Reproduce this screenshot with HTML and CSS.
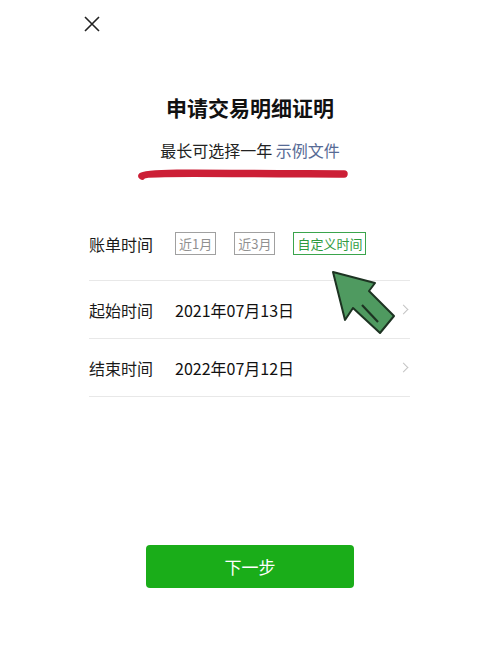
FILE: index.html
```html
<!DOCTYPE html>
<html lang="zh-CN">
<head>
  <meta charset="UTF-8">
  <title>申请交易明细证明</title>
  <link rel="stylesheet" href="styles.css">
</head>
<body>

<div class="page">

  <div class="close">
    <svg width="16" height="16" viewBox="0 0 16 16">
      <path d="M1 1 L15 15 M15 1 L1 15" stroke="#222" stroke-width="1.6" fill="none"/>
    </svg>
  </div>

  <div class="head">
    <h2 class="title">申请交易明细证明</h2>
    <p class="sub">最长可选择一年 <span class="link">示例文件</span></p>
    <svg class="mark" width="216" height="14" viewBox="0 0 216 14">
      <path d="M5 8 C 8 4.5, 60 5, 110 5.5 S 190 5.5, 207 6" stroke="#cc1f36" stroke-width="7.5" stroke-linecap="round" fill="none"/>
    </svg>
  </div>

  <div class="form">
    <div class="row first">
      <span class="label">账单时间</span>
      <div class="chips">
        <span class="chip">近1月</span>
        <span class="chip">近3月</span>
        <span class="chip on">自定义时间</span>
      </div>
    </div>
    <div class="row">
      <span class="label">起始时间</span>
      <span class="value">2021年07月13日</span>
      <span class="arrow"></span>
    </div>
    <div class="row">
      <span class="label">结束时间</span>
      <span class="value">2022年07月12日</span>
      <span class="arrow"></span>
    </div>
  </div>

  <div class="actions">
    <button class="next">下一步</button>
  </div>

  <!-- hand-drawn pointer over the custom time chip -->
  <svg class="pointer" width="80" height="75" viewBox="0 0 80 75">
    <polygon points="8,7 50,18 44,26 69,51 55,68 28,43 20,55" fill="#4f9a60" stroke="#1d3322" stroke-width="2" stroke-linejoin="round"/>
    <path d="M37 40 L53 57" stroke="#1d3322" stroke-width="2.2"/>
  </svg>

</div>

</body>
</html>
```

FILE: styles.css
```css
body {
  margin: 0;
  background: #fff;
  font-family: "Noto Sans CJK SC", "Noto Sans", sans-serif;
  color: #1a1a1a;
}
.page {
  position: relative;
  width: 500px;
  height: 656px;
}
.close {
  padding: 16px 0 0 84px;
  height: 16px;
  line-height: 0;
}
.head {
  text-align: center;
  padding-top: 61px;
}
.title {
  margin: 0;
  font-size: 21px;
  line-height: 28px;
  font-weight: bold;
  color: #111;
}
.sub {
  margin: 18px 0 0;
  font-size: 16px;
  line-height: 22px;
  color: #222;
}
.link {
  color: #576b95;
}
.mark {
  display: block;
  margin: 7px 0 0 137px;
}
.form {
  margin: 40px 90px 0 89px;
}
.row {
  display: flex;
  align-items: center;
  height: 57px;
  border-bottom: 1px solid #e8e8e8;
  font-size: 16px;
}
.row.first {
  height: 58px;
  align-items: flex-start;
}
.row.first .label,
.row.first .chips {
  margin-top: 10px;
}
.label {
  width: 86px;
  flex: none;
  color: #1a1a1a;
}
.value {
  flex: 1;
  color: #111;
}
.chips {
  display: flex;
  gap: 18px;
}
.chip {
  display: inline-block;
  height: 21px;
  line-height: 21px;
  padding: 0 3px;
  border: 1px solid #a0a0a0;
  font-size: 13px;
  color: #909090;
}
.chip.on {
  border-color: #3aa44c;
  color: #2f9b40;
}
.arrow {
  width: 6px;
  height: 6px;
  border-top: 1.5px solid #c4c4c4;
  border-right: 1.5px solid #c4c4c4;
  transform: rotate(45deg);
  margin-right: 3px;
}
.actions {
  padding: 148px 0 0 146px;
}
.next {
  width: 208px;
  height: 43px;
  border: none;
  border-radius: 4px;
  background: #1aad19;
  color: #fff;
  font-family: inherit;
  font-size: 17px;
  cursor: pointer;
}
.pointer {
  position: absolute;
  left: 325px;
  top: 265px;
}
```
